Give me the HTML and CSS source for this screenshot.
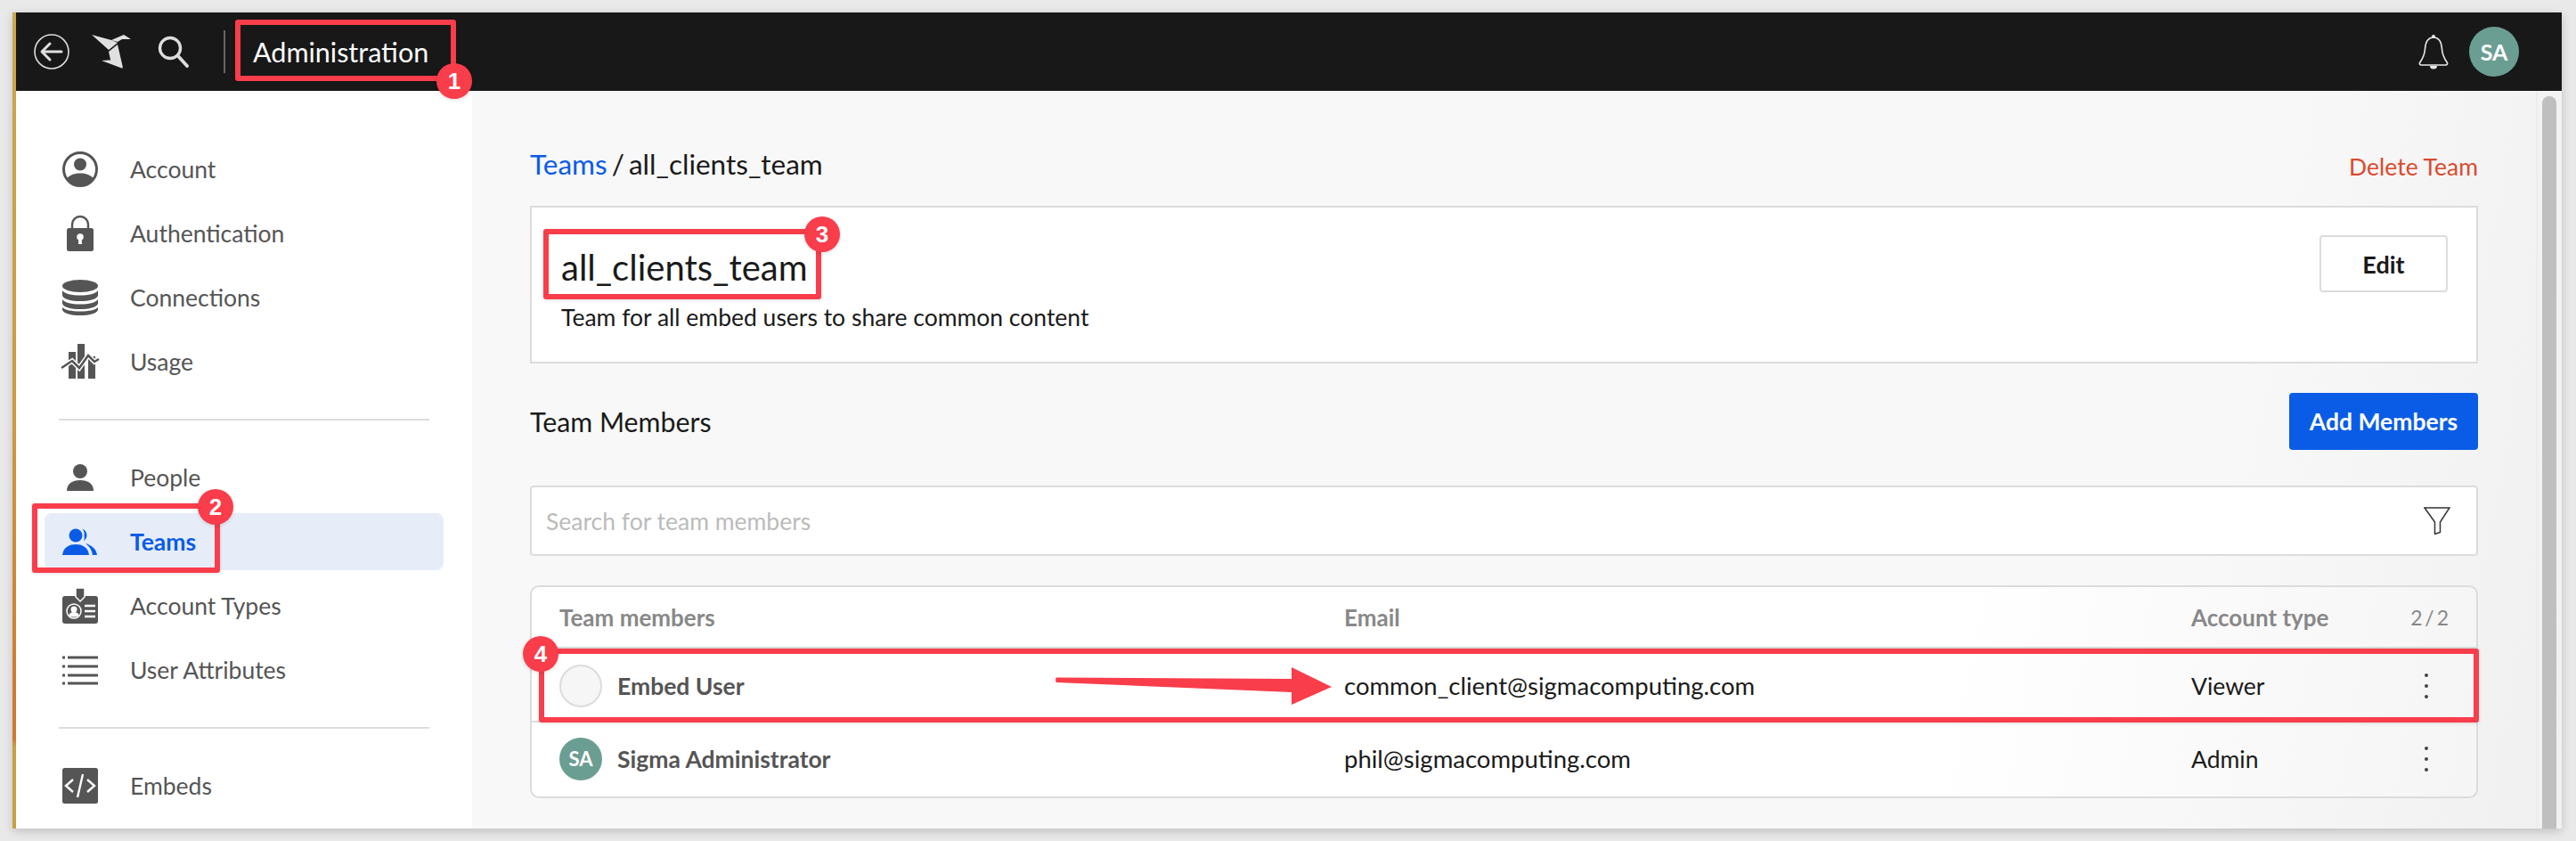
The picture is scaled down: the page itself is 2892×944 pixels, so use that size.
FILE: index.html
```html
<!DOCTYPE html>
<html lang="en">
<head>
  <meta charset="UTF-8">
  <title>Team - Administration</title>
  <link rel="stylesheet" href="styles.css">
</head>
<body>
  <div class="window">
    <div class="strip"></div>
    <div class="app">
      <header class="topbar">
        <svg class="back" viewBox="0 0 40 40"><circle cx="20" cy="20" r="19" fill="none" stroke="#ddd" stroke-width="1.6"/><path d="M31 20H10M18 11l-9 9 9 9" fill="none" stroke="#e0e0e0" stroke-width="3" stroke-linecap="round" stroke-linejoin="round"/></svg>
        <svg class="bird" viewBox="0 0 44 38"><path d="M0 0L19 17 29 9 22 6Z M19 19L29 11 35 37 21 28Z M11 29L27 28 35 38Z M22 6L36 0 44 5 34 5 29 8Z" fill="#e0e0e0"/></svg>
        <svg class="search" viewBox="0 0 35 36"><circle cx="14" cy="14" r="11.5" fill="none" stroke="#ddd" stroke-width="3.4"/><path d="M23 23l10 11" stroke="#ddd" stroke-width="3.8" stroke-linecap="round"/></svg>
        <div class="bar-line"></div>
        <div class="bar-title">Administration</div>
        <div class="bar-right">
          <svg class="bell" viewBox="0 0 34 40"><path d="M17 4C10 4 8 10 7.500 17 7 25 4 29 1.500 32.500 1 34 2 35 3 35H31C32 35 33 34 32.500 32.500 30 29 27 25 26.500 17 26 10 24 4 17 4Z" fill="none" stroke="#e8e8e8" stroke-width="1.6"/><circle cx="17" cy="3" r="2" fill="#e8e8e8"/><path d="M13 36a4 3.500 0 0 0 8 0Z" fill="#e8e8e8"/></svg>
          <div class="avatar avatar-top">SA</div>
        </div>
      </header>
      <div class="content">
        <nav class="sidebar">
          <a class="nav-item">
            <svg class="nav-icon" viewBox="0 0 40 40"><circle cx="20" cy="20" r="18.500" fill="none" stroke="#555" stroke-width="3"/><circle cx="20" cy="14.500" r="7" fill="#555"/><path d="M5.500 30C9 26 14 24.500 20 24.500S31 26 34.500 30C31 35 26 38 20 38S9 35 5.500 30Z" fill="#555"/></svg>
            <span>Account</span>
          </a>
          <a class="nav-item">
            <svg class="nav-icon" viewBox="0 0 40 40"><path d="M11 16V10a9 9 0 0 1 18 0v6" fill="none" stroke="#555" stroke-width="2.400"/><rect x="5" y="14" width="30" height="26" rx="2.500" fill="#555"/><circle cx="20" cy="24" r="3.800" fill="#fff"/><path d="M18.500 25h3l.6 7h-4.200z" fill="#fff"/></svg>
            <span>Authentication</span>
          </a>
          <a class="nav-item">
            <svg class="nav-icon" viewBox="0 0 40 40"><ellipse cx="20" cy="7" rx="20" ry="7" fill="#555"/><path d="M0 12c3 4 10 5.500 20 5.500S37 16 40 12v6c-2 4-10 6-20 6S2 22 0 18Z" fill="#555"/><path d="M0 22c3 4 10 5.500 20 5.500S37 26 40 22v5c-2 4-10 6-20 6S2 31 0 27Z" fill="#555"/><path d="M0 31c3 3 10 4.500 20 4.500S37 34 40 31v3c-2 4-10 6-20 6S2 38 0 34Z" fill="#555"/></svg>
            <span>Connections</span>
          </a>
          <a class="nav-item">
            <svg class="nav-icon" viewBox="0 0 40 40"><path d="M7 9h8v30H7zM17 0h8v39h-8zM29 14h8v25h-8z" fill="#555"/><path d="M-1 27L11 19l8 8 10-14 7 7 5-3" fill="none" stroke="#fff" stroke-width="5.500"/><path d="M-1 27L11 19l8 8 10-14 7 7 5-3" fill="none" stroke="#555" stroke-width="2.500"/></svg>
            <span>Usage</span>
          </a>
          <div class="nav-line"></div>
          <a class="nav-item">
            <svg class="nav-icon" viewBox="0 0 40 40"><circle cx="20" cy="13" r="8" fill="#555"/><path d="M5 35c0-8 6-12 15-12s15 4 15 12Z" fill="#555"/></svg>
            <span>People</span>
          </a>
          <a class="nav-item nav-active">
            <svg class="nav-icon" viewBox="0 0 40 40"><circle cx="15" cy="13" r="7.500" fill="#0a5ce6"/><path d="M0 35C1 26 8 23 15 23s14 3 15 12Z" fill="#0a5ce6"/><path d="M22 5.500A7.500 7.500 0 0 1 24 19 9 9 0 0 0 24.500 13 8 8 0 0 0 22 5.500Z" fill="#0a5ce6"/><path d="M26 22c7 2 12 6 13 13h-5c-1-6-4-10-8-13Z" fill="#0a5ce6"/></svg>
            <span>Teams</span>
          </a>
          <a class="nav-item">
            <svg class="nav-icon" viewBox="0 0 40 40"><rect y="9" width="40" height="31" rx="3" fill="#555"/><path d="M15 0h10v10l-5 5-5-5Z" fill="#555" stroke="#fff" stroke-width="1.500"/><circle cx="13" cy="26" r="8" fill="#555" stroke="#fff" stroke-width="1.500"/><circle cx="13" cy="24" r="3.500" fill="#fff"/><path d="M7 31c1-3 3-4 6-4s5 1 6 4q-6 3-12 0Z" fill="#fff"/><path d="M25 20h12M25 26h12M25 32h12" stroke="#fff" stroke-width="2.500"/></svg>
            <span>Account Types</span>
          </a>
          <a class="nav-item">
            <svg class="nav-icon" viewBox="0 0 40 40"><path d="M0 6h3M6 6h34M0 16h3M6 16h34M0 26h3M6 26h34M0 35h3M6 35h34" stroke="#555" stroke-width="2.800"/></svg>
            <span>User Attributes</span>
          </a>
          <div class="nav-line"></div>
          <a class="nav-item">
            <svg class="nav-icon" viewBox="0 0 40 40"><rect width="40" height="40" rx="2.500" fill="#555"/><path d="M12 13l-8 7 8 7M28 13l8 7-8 7M23 7l-6 26" fill="none" stroke="#fff" stroke-width="2.400"/></svg>
            <span>Embeds</span>
          </a>
        </nav>
        <main class="main">
          <div class="page">
            <div class="crumb-row">
              <div class="crumbs"><a class="link">Teams</a> / all_clients_team</div>
              <a class="delete">Delete Team</a>
            </div>
            <section class="team-card">
              <div>
                <h1 class="team-name">all_clients_team</h1>
                <p class="team-desc">Team for all embed users to share common content</p>
              </div>
              <button class="btn-edit">Edit</button>
            </section>
            <div class="members-head">
              <h2 class="members-title">Team Members</h2>
              <button class="btn-add">Add Members</button>
            </div>
            <div class="searchbox">
              <span class="placeholder">Search for team members</span>
              <svg class="filter" viewBox="0 0 30 31"><path d="M1 1h28L18.500 17v11.500l-6 2V17Z" fill="none" stroke="#333" stroke-width="1.500"/></svg>
            </div>
            <div class="members">
              <div class="row row-head">
                <div>Team members</div>
                <div>Email</div>
                <div>Account type</div>
                <div class="count">2 / 2</div>
              </div>
              <div class="row row-first">
                <div class="who"><div class="avatar avatar-empty"></div>Embed User</div>
                <div class="email">common_client@sigmacomputing.com</div>
                <div>Viewer</div>
                <svg class="kebab" viewBox="0 0 4 28"><circle cx="2" cy="2" r="2"/><circle cx="2" cy="14" r="2"/><circle cx="2" cy="26" r="2"/></svg>
              </div>
              <div class="row row-last">
                <div class="who"><div class="avatar avatar-sa">SA</div>Sigma Administrator</div>
                <div class="email">phil@sigmacomputing.com</div>
                <div>Admin</div>
                <svg class="kebab" viewBox="0 0 4 28"><circle cx="2" cy="2" r="2"/><circle cx="2" cy="14" r="2"/><circle cx="2" cy="26" r="2"/></svg>
              </div>
            </div>
          </div>
          <div class="scrollbar"><div class="thumb"></div></div>
        </main>
      </div>
    </div>
  </div>

  <!-- red callouts drawn over the screenshot -->
  <div class="mark mark-1"></div>
  <div class="mark mark-2"></div>
  <div class="mark mark-3"></div>
  <div class="mark mark-4"></div>
  <div class="badge badge-1">1</div>
  <div class="badge badge-2">2</div>
  <div class="badge badge-3">3</div>
  <div class="badge badge-4">4</div>
  <svg class="arrow" viewBox="0 0 311 42"><path d="M2 11.500L266 13V0L311 22 266 42V28L2 17Q0 14 2 11.500Z" fill="#f93d4b"/></svg>
</body>
</html>
```

FILE: styles.css
```css
* {
  box-sizing: border-box;
}
body {
  margin: 0;
  width: 2892px;
  height: 944px;
  overflow: hidden;
  position: relative;
  background-color: #e9e9e9;
  font-family: "Lato", "Liberation Sans", sans-serif;
  padding: 14px 16px 14px 14px;
}
a {
  color: inherit;
  text-decoration: none;
}
.window {
  display: flex;
  height: 916px;
  box-shadow: 0 3px 10px rgba(0, 0, 0, 0.18);
}
.strip {
  width: 4px;
  flex-shrink: 0;
  background: linear-gradient(to bottom, #c9a84e 0%, #cf9a3c 50%, #d07a30 84%, #d0782f 89%, #c9a040 90%, #c9a040 100%);
}
.app {
  flex: 1;
  display: flex;
  flex-direction: column;
  overflow: hidden;
}

/* top bar */
.topbar {
  height: 88px;
  flex-shrink: 0;
  background-color: #181818;
  display: flex;
  align-items: center;
  padding: 0 48px 0 20px;
  color: #fff;
}
.back {
  width: 40px;
  height: 40px;
  margin-right: 25px;
}
.bird {
  width: 44px;
  height: 38px;
  margin-right: 30px;
}
.search {
  width: 35px;
  height: 36px;
  margin-right: 39px;
}
.bar-line {
  width: 2px;
  height: 48px;
  background-color: #666;
  margin-right: 31px;
}
.bar-title {
  font-size: 30.500px;
}
.bar-right {
  margin-left: auto;
  display: flex;
  align-items: center;
  gap: 23px;
}
.bell {
  width: 34px;
  height: 40px;
}
.avatar {
  border-radius: 50%;
  display: flex;
  align-items: center;
  justify-content: center;
  flex-shrink: 0;
  color: #fff;
  font-weight: 700;
}
.avatar-top {
  width: 56px;
  height: 56px;
  background-color: #6b9e92;
  font-size: 25px;
}

/* sidebar */
.content {
  flex: 1;
  display: flex;
  min-height: 0;
}
.sidebar {
  width: 512px;
  flex-shrink: 0;
  background-color: #fff;
  padding: 56px 32px 0;
  display: flex;
  flex-direction: column;
  gap: 8px;
}
.nav-item {
  width: 448px;
  height: 64px;
  flex-shrink: 0;
  display: flex;
  align-items: center;
  gap: 36px;
  padding-left: 20px;
  border-radius: 8px;
  font-size: 26.500px;
  color: #555;
}
.nav-icon {
  width: 40px;
  height: 40px;
  flex-shrink: 0;
  overflow: visible;
}
.nav-active {
  background-color: #e6edf9;
  color: #0a5ce6;
  font-weight: 700;
}
.nav-line {
  width: 416px;
  height: 2px;
  flex-shrink: 0;
  background-color: #dcdcdc;
  margin: 24px 0 24px 16px;
}

/* main area */
.main {
  flex: 1;
  display: flex;
  justify-content: space-between;
  background: linear-gradient(100deg, #f8f8f8 82%, #f0f0f0 100%);
  min-width: 0;
}
.page {
  width: 2187px;
  margin-left: 65px;
  padding-top: 56px;
}
.crumb-row {
  height: 52px;
  display: flex;
  align-items: center;
  justify-content: space-between;
  font-size: 31.500px;
  word-spacing: -3px;
  color: #1a1a1a;
}
.link {
  color: #0a5ce6;
}
.delete {
  color: #da4a30;
  font-size: 26.500px;
  word-spacing: 0;
  margin-top: 6px;
}
.team-card {
  margin-top: 21px;
  height: 177px;
  background-color: #fff;
  border: 2px solid #dcdcdc;
  padding: 42px 32px 0 33px;
  display: flex;
  justify-content: space-between;
  align-items: flex-start;
}
.team-name {
  margin: 0;
  font-size: 40px;
  font-weight: 400;
  line-height: 50px;
  color: #1a1a1a;
}
.team-desc {
  margin: 14px 0 0;
  font-size: 26.500px;
  line-height: 34px;
  color: #1a1a1a;
}
.btn-edit {
  width: 144px;
  height: 64px;
  margin-top: -11px;
  background-color: #fff;
  border: 2px solid #dcdcdc;
  border-radius: 4px;
  font-family: inherit;
  font-size: 27px;
  font-weight: 700;
  color: #1a1a1a;
}
.members-head {
  margin-top: 33px;
  height: 64px;
  display: flex;
  align-items: center;
  justify-content: space-between;
}
.members-title {
  margin: 0;
  font-size: 30.300px;
  font-weight: 400;
  color: #1a1a1a;
}
.btn-add {
  width: 212px;
  height: 64px;
  background-color: #0a5ce6;
  border: none;
  border-radius: 4px;
  font-family: inherit;
  font-size: 26.500px;
  font-weight: 700;
  color: #fff;
}
.searchbox {
  margin-top: 40px;
  height: 79px;
  background-color: #fff;
  border: 2px solid #dcdcdc;
  border-radius: 4px;
  display: flex;
  align-items: center;
  justify-content: space-between;
  padding: 0 29px 0 16px;
}
.placeholder {
  font-size: 26.500px;
  color: #bbb;
}
.filter {
  width: 30px;
  height: 31px;
}
.members {
  margin-top: 33px;
  height: 239px;
  background: linear-gradient(100deg, #fff 72%, #f5f5f5 100%);
  border: 2px solid #dcdcdc;
  border-radius: 10px;
}
.row {
  display: grid;
  grid-template-columns: 881px 951px 1fr 50px;
  align-items: center;
  padding: 0 31px;
  font-size: 26.500px;
  color: #1a1a1a;
}
.row-head {
  height: 69px;
  color: #888;
  font-weight: 700;
  border-bottom: 2px solid #dcdcdc;
  font-size: 26px;
}
.row-first {
  height: 83px;
  padding-top: 2px;
  border-bottom: 2px solid #dcdcdc;
}
.row-last {
  height: 83px;
  padding-bottom: 2px;
}
.email {
  font-size: 27.500px;
}
.count {
  color: #888;
  font-weight: 400;
  text-align: right;
  white-space: nowrap;
  font-size: 23px;
  word-spacing: -3px;
}
.who {
  display: flex;
  align-items: center;
  gap: 17px;
  color: #555;
  font-weight: 700;
}
.avatar-empty {
  width: 48px;
  height: 48px;
  background-color: #f6f6f6;
  border: 2px solid #dcdcdc;
}
.avatar-sa {
  width: 48px;
  height: 48px;
  background-color: #6b9e92;
  font-size: 22px;
}
.kebab {
  width: 4px;
  height: 28px;
  fill: #444;
  justify-self: center;
}
.scrollbar {
  width: 29px;
  flex-shrink: 0;
  border-left: 2px solid #ececec;
  padding: 6px 0 0 5px;
}
.thumb {
  width: 16px;
  height: 900px;
  background-color: #bfbfbf;
  border-radius: 8px;
}

/* callouts */
.mark {
  position: absolute;
  border: 6px solid #f93d4b;
  border-radius: 3px;
  box-shadow: 0 1px 4px rgba(0, 0, 0, 0.12);
}
.mark-1 {
  left: 264px;
  top: 22px;
  width: 248px;
  height: 69px;
}
.mark-2 {
  left: 36px;
  top: 565px;
  width: 211px;
  height: 78px;
}
.mark-3 {
  left: 610px;
  top: 257px;
  width: 312px;
  height: 79px;
}
.mark-4 {
  left: 605px;
  top: 728px;
  width: 2178px;
  height: 83px;
}
.badge {
  position: absolute;
  width: 40px;
  height: 40px;
  border-radius: 50%;
  background-color: #f93d4b;
  color: #fff;
  font-family: "Liberation Sans", sans-serif;
  font-weight: 700;
  font-size: 26px;
  display: flex;
  align-items: center;
  justify-content: center;
  box-shadow: 0 1px 4px rgba(0, 0, 0, 0.15);
}
.badge-1 {
  left: 490px;
  top: 71px;
}
.badge-2 {
  left: 222px;
  top: 549px;
}
.badge-3 {
  left: 903px;
  top: 243px;
}
.badge-4 {
  left: 587px;
  top: 714px;
}
.arrow {
  position: absolute;
  left: 1184px;
  top: 749px;
  width: 311px;
  height: 42px;
}
```
